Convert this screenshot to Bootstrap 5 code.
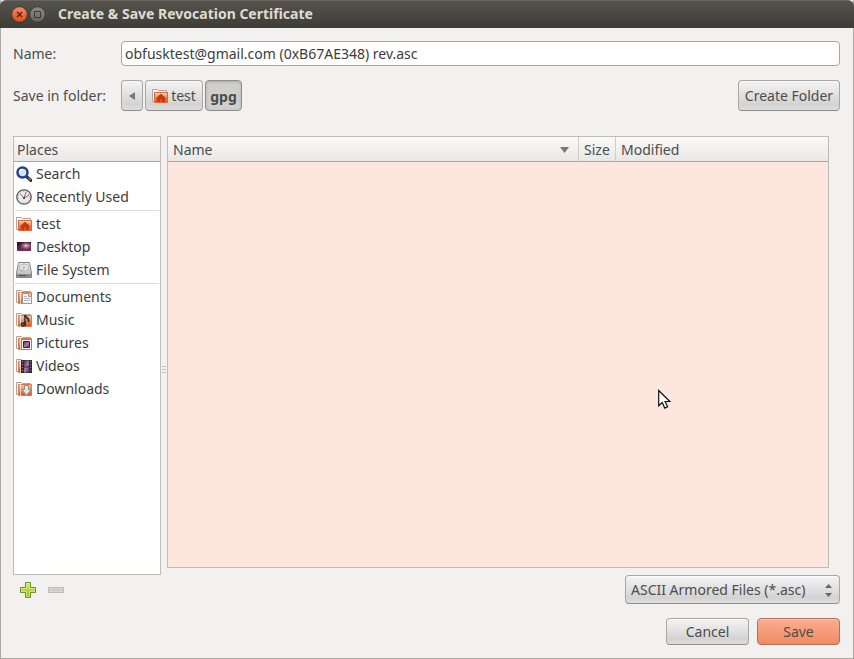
<!DOCTYPE html>
<html lang="en">
<head>
<meta charset="utf-8">
<meta name="viewport" content="width=device-width, initial-scale=1">
<title>Create &amp; Save Revocation Certificate</title>
<link rel="stylesheet" href="https://cdn.jsdelivr.net/npm/bootstrap@5.3.0/dist/css/bootstrap.min.css">
<style>
body { font: 14px/20px "Noto Sans", "Open Sans", sans-serif; color: #4c4c4c; background: #f2f1f0; }
svg { display: block; flex: none; }
.dialog-window { border: 1px solid #aca9a4; border-top: 0; }
.title-bar { height: 28px; margin: 0 -1px; padding: 0 11px 1px; gap: 1px; background: linear-gradient(#55534c, #3d3c37); border-top: 1px solid #66645d; border-radius: 6px 6px 0 0; color: #dfdbd2; }
.title-bar h1 { font-size: 14px; line-height: 20px; padding-left: 11px; }
.round-btn { width: 17px; height: 17px; border: 0; padding: 0; background: none; }
.dialog-body { padding: 13px 13px 13px 12px; }
.row-label { width: 108px; }
.name-input { height: 25px; padding: 0 3px 1px; font-size: 14px; line-height: 20px; color: #3c3c3c; border: 1px solid #a8a49f; border-radius: 4px; background: #fff; }
.gtk-btn { display: flex; align-items: center; justify-content: center; padding: 0 4px; font-size: 14px; line-height: 20px; color: #4c4c4c; border: 1px solid #a9a7a5; border-bottom-color: #8f8d8b; border-radius: 4px; background: linear-gradient(#f4f4f4, #e2e2e2 45%, #d3d3d3 80%, #dedede); box-shadow: inset 0 1px #fafafa; white-space: nowrap; }
.folder-row { margin-top: 14px; }
.path-bar { gap: 2px; }
.path-btn { height: 31px; }
.path-back { width: 22px; }
.path-home { width: 58px; gap: 3px; }
.path-current { width: 37px; font-weight: 700; background: #d0cfce; border-color: #8f8d8b; box-shadow: inset 0 1px 3px #aaa; padding-top: 2px; }
.create-btn { width: 102px; height: 31px; }
.panes { margin-top: 25px; }
.places-col { width: 148px; }
.pane-box { border: 1px solid #bfbcb8; }
.pane-head, .file-table th { height: 25px; padding: 2px 3px 0; font-size: 14px; line-height: 22px; font-weight: 400; color: #4c4c4c; background: linear-gradient(#f9f9f8, #e9e8e7); border-bottom: 1px solid #aaa7a3; }
.file-table { border-collapse: separate; border-spacing: 0; }
.file-table th { padding: 2px 5px 0; }
.file-table th + th { border-left: 1px solid #cfcdca; }
.col-size { width: 37px; }
.col-modified { width: 213px; }
.place-link { display: flex; align-items: center; gap: 4px; height: 23px; padding-left: 2px; color: #3c3c3c; text-decoration: none; white-space: nowrap; }
.place-sep { height: 4px; margin: 0 1px; padding-top: 2px; }
.place-sep::before { content: ""; display: block; height: 1px; background: #dddcda; }
.grip { width: 6px; }
.file-pane { margin: 0 11px 7px 0; background: #fde6de; }
.pointer { position: absolute; left: 490px; top: 252px; }
.tool-row { height: 29px; padding-left: 7px; gap: 12px; }
.tool-btn { width: 16px; height: 16px; border: 0; padding: 0; background: none; }
.filter-wrap { width: 215px; }
.filter-select { display: block; width: 100%; height: 29px; padding: 0 5px; appearance: none; }
.filter-arrows { position: absolute; right: 8px; top: 9px; pointer-events: none; }
.footer-row { margin-top: 14px; gap: 8px; }
.action-btn { width: 83px; height: 27px; }
.save-btn { background: linear-gradient(#fbad92, #f08a62); border-color: #b0705a; box-shadow: inset 0 1px #ffc0a9; }
</style>
<script src="https://cdn.jsdelivr.net/npm/bootstrap@5.3.0/dist/js/bootstrap.bundle.min.js"></script>
</head>
<body>
<svg width="0" height="0" class="position-absolute" aria-hidden="true">
  <defs>
    <linearGradient id="orange" x2="0" y2="1"><stop stop-color="#f9cba6"/><stop offset=".5" stop-color="#f0905a"/><stop offset="1" stop-color="#dc4a16"/></linearGradient>
    <linearGradient id="closeFill" x2="0" y2="1"><stop stop-color="#f58b66"/><stop offset="1" stop-color="#df4a1b"/></linearGradient>
    <linearGradient id="greyFill" x2="0" y2="1"><stop stop-color="#8e8c84"/><stop offset="1" stop-color="#65635c"/></linearGradient>
    <linearGradient id="metal" x2="0" y2="1"><stop stop-color="#ececec"/><stop offset="1" stop-color="#b5b5b5"/></linearGradient>
    <linearGradient id="green" x2="0" y2="1"><stop stop-color="#dcea62"/><stop offset="1" stop-color="#98b822"/></linearGradient>
    <linearGradient id="purple" x2="1" y2="1"><stop stop-color="#4b2548"/><stop offset=".5" stop-color="#a97aab"/><stop offset="1" stop-color="#5c3566"/></linearGradient>
    <linearGradient id="desk" x2="0" y2="1"><stop stop-color="#2e0719"/><stop offset="1" stop-color="#7a3058"/></linearGradient>
    <radialGradient id="deskGlow" cx=".65" cy=".4" r=".5"><stop stop-color="#f3cfe0"/><stop offset="1" stop-color="#c06a98" stop-opacity="0"/></radialGradient>
    <g id="folder">
      <path d="M.5 13.500v-12h5l1 1h8v11z" fill="#f7f6f4" stroke="#aaa7a3"/>
      <path d="M2.500 4.500h13v10h-13z" fill="url(#orange)" stroke="#d9683c"/>
      <path d="M3.500 5.500h11" stroke="#ffe3c7" opacity=".7"/>
    </g>
    <g id="sleeve">
      <path d="M.5 13.500v-12h5l1 1h8v11z" fill="#f7f6f4" stroke="#aaa7a3"/>
      <path d="M2.500 3.500h13v11h-13z" fill="url(#orange)" stroke="#e07a4c"/>
      <path d="M4.500 3v12" stroke="#fff0df" opacity=".75"/>
    </g>
    <g id="homeFolder">
      <use href="#folder"/>
      <path d="M9 6 4 10.500h1.500v3H8V11h2v2.500h2.500v-3H14z" fill="#c7360c" stroke="#b93410" stroke-width=".5"/>
    </g>
  </defs>
</svg>

<div class="dialog-window d-flex flex-column min-vh-100">
  <header class="title-bar d-flex align-items-center">
    <button class="round-btn" type="button" aria-label="Close"><svg width="17" height="17" viewBox="0 0 17 17"><circle cx="8.500" cy="8.500" r="7.800" fill="url(#closeFill)" stroke="#32312c" stroke-width=".8"/><path d="m6 6 5 5m0-5-5 5" stroke="#4b2012" stroke-width="1.200"/></svg></button>
    <button class="round-btn" type="button" aria-label="Maximize"><svg width="17" height="17" viewBox="0 0 17 17"><circle cx="8.500" cy="8.500" r="7.800" fill="url(#greyFill)" stroke="#32312c" stroke-width=".8"/><path d="M5.500 5.500h6v6h-6z" fill="none" stroke="#3a3934"/></svg></button>
    <h1 class="m-0 fw-bold">Create &amp; Save Revocation Certificate</h1>
  </header>

  <main class="dialog-body d-flex flex-column flex-grow-1">
    <div class="d-flex align-items-center">
      <label class="row-label" for="fileName">Name:</label>
      <input class="name-input flex-grow-1" id="fileName" type="text" value="obfusktest@gmail.com (0xB67AE348) rev.asc">
    </div>

    <div class="folder-row d-flex align-items-center">
      <span class="row-label" id="folderLabel">Save in folder:</span>
      <div class="path-bar d-flex me-auto" role="group" aria-labelledby="folderLabel">
        <button class="gtk-btn path-btn path-back" type="button" aria-label="Back"><svg width="6" height="8" viewBox="0 0 6 8"><path d="M6 0v8L0 4z" fill="#777"/></svg></button>
        <button class="gtk-btn path-btn path-home" type="button"><svg width="16" height="16" viewBox="0 0 16 16"><use href="#homeFolder"/></svg>test</button>
        <button class="gtk-btn path-btn path-current" type="button">gpg</button>
      </div>
      <button class="gtk-btn create-btn" type="button">Create Folder</button>
    </div>

    <div class="panes d-flex flex-grow-1">
      <div class="places-col d-flex flex-column flex-shrink-0">
        <nav class="pane-box bg-white flex-grow-1" aria-label="Places">
          <div class="pane-head">Places</div>
          <a class="place-link" href="#"><svg width="16" height="16" viewBox="0 0 16 16"><path d="m11 11 4 3.500" stroke="#333" stroke-width="3" stroke-linecap="round"/><path d="m12.500 12 2 1.800" stroke="#bbb"/><circle cx="6.500" cy="6.500" r="5" fill="#d6e3f5" stroke="#23408e" stroke-width="2.500"/><path d="M3.500 6a3 3 0 0 1 3-2.500" stroke="#fff" stroke-width="1.500" fill="none"/></svg>Search</a>
          <a class="place-link" href="#"><svg width="16" height="16" viewBox="0 0 16 16"><circle cx="8" cy="8" r="7.200" fill="#ececeb" stroke="#555753" stroke-width="1.300"/><circle cx="8" cy="8" r="5.500" fill="none" stroke="#aaa" stroke-dasharray="1 2"/><path d="M4 4.500 8 9l2-6" stroke="#777" fill="none"/><path d="m8 9 5-3" stroke="#d44"/><circle cx="8" cy="9" r="1.200" fill="#555"/></svg>Recently Used</a>
          <div class="place-sep"></div>
          <a class="place-link" href="#"><svg width="16" height="16" viewBox="0 0 16 16"><use href="#homeFolder"/></svg>test</a>
          <a class="place-link" href="#"><svg width="16" height="16" viewBox="0 0 16 16"><path d="M1 3h14v9H1z" fill="url(#desk)"/><path d="M1 3h14v9H1z" fill="url(#deskGlow)"/></svg>Desktop</a>
          <a class="place-link" href="#"><svg width="16" height="16" viewBox="0 0 16 16"><path d="M2.500.5h11l2 10.500v4.500H.5V11z" fill="url(#metal)" stroke="#858585"/><path d="M1 12h14v3H1z" fill="#8b8b8b"/><ellipse cx="8" cy="5.500" rx="4.500" ry="3.500" fill="#e4e4e4" stroke="#b5b5b5"/><circle cx="8" cy="5.500" r="1" fill="#aaa"/><path d="m4.500 10 3-3.500" stroke="#aaa"/><path d="M3 13.500h7" stroke="#555"/></svg>File System</a>
          <div class="place-sep"></div>
          <a class="place-link" href="#"><svg width="16" height="16" viewBox="0 0 16 16"><use href="#sleeve"/><path d="M6.500 4.500h6l3 3v7h-9z" fill="#f4f4f3" stroke="#999"/><path d="M12.500 4.500v3h3" fill="#ddd" stroke="#999"/><path d="M8 7.500h3m-3 2h6m-6 2h6" stroke="#b5b5b5"/></svg>Documents</a>
          <a class="place-link" href="#"><svg width="16" height="16" viewBox="0 0 16 16"><use href="#sleeve"/><path d="M9 3v9M9 3.500c1 2.500 4.500 2 3.500 6.500" fill="none" stroke="#2e3436" stroke-width="2"/><ellipse cx="7.300" cy="12.500" rx="2.700" ry="2.200" fill="#2e3436"/><path d="M6 12.500h1.500M9 5v4" stroke="#8a8d8a" stroke-width=".7"/></svg>Music</a>
          <a class="place-link" href="#"><svg width="16" height="16" viewBox="0 0 16 16"><use href="#sleeve"/><path d="M5.500 4.500h10v10h-10z" fill="#f3f3f2" stroke="#888"/><path d="M7.500 6.500h6v6h-6z" fill="url(#purple)" stroke="#2e2433"/></svg>Pictures</a>
          <a class="place-link" href="#"><svg width="16" height="16" viewBox="0 0 16 16"><use href="#sleeve"/><path d="M5 2h11v13H5z" fill="#302a32"/><path d="M8 2.500h5v6H8zm0 7h5v5H8z" fill="url(#purple)"/><path d="M6.500 3v12m8-12v12" stroke="#8a848c" stroke-dasharray="1 2"/></svg>Videos</a>
          <a class="place-link" href="#"><svg width="16" height="16" viewBox="0 0 16 16"><use href="#sleeve"/><path d="M8.500 4.500h4v4h2.500l-4.500 6-4.500-6h2.500z" fill="#e3e3e2" stroke="#8d8d8c"/></svg>Downloads</a>
        </nav>
        <div class="tool-row d-flex align-items-center">
          <button class="tool-btn" type="button" aria-label="Add bookmark"><svg width="16" height="16" viewBox="0 0 16 16"><path d="M5.500.5h5v5h5v5h-5v5h-5v-5h-5v-5h5z" fill="url(#green)" stroke="#5f9632"/><path d="M6.500 1.500h3v5h5v3h-5v5h-3v-5h-5v-3h5z" fill="none" stroke="#e4ef90" opacity=".7"/></svg></button>
          <button class="tool-btn" type="button" aria-label="Remove bookmark" disabled><svg width="16" height="16" viewBox="0 0 16 16"><path d="M.5 5.500h15v5H.5z" fill="#cdcac8" stroke="#bdbab7"/><path d="M1.500 6.500h13v3h-13z" fill="none" stroke="#d9d7d5"/></svg></button>
        </div>
      </div>

      <div class="grip d-flex align-items-center justify-content-center flex-shrink-0"><svg width="4" height="8" viewBox="0 0 4 8"><path d="M0 .5h4m-4 3h4m-4 3h4" stroke="#c5c2bf"/></svg></div>

      <div class="d-flex flex-column flex-grow-1">
        <div class="file-pane pane-box position-relative flex-grow-1">
          <table class="file-table w-100">
            <thead>
              <tr>
                <th scope="col"><div class="d-flex align-items-center justify-content-between">Name<svg class="me-1" width="9" height="6" viewBox="0 0 9 6"><path d="M0 0h9L4.500 6z" fill="#777"/></svg></div></th>
                <th scope="col" class="col-size">Size</th>
                <th scope="col" class="col-modified">Modified</th>
              </tr>
            </thead>
          </table>
          <svg class="pointer" width="14" height="21" viewBox="0 0 14 21" aria-hidden="true"><path d="M.7 1.500v15.300l3.500-3.200 2.600 5.500 2.800-1.300-2.500-5.300h4.700z" fill="#fff" stroke="#111" stroke-width="1.200"/></svg>
        </div>
        <div class="filter-wrap position-relative align-self-end">
          <select class="gtk-btn filter-select" aria-label="File type"><option>ASCII Armored Files (*.asc)</option></select>
          <svg class="filter-arrows" width="7" height="13" viewBox="0 0 7 13"><path d="M0 4h7L3.500 0zm0 5h7l-3.500 4z" fill="#666"/></svg>
        </div>
      </div>
    </div>

    <div class="footer-row d-flex justify-content-end">
      <button class="gtk-btn action-btn" type="button">Cancel</button>
      <button class="gtk-btn action-btn save-btn" type="button">Save</button>
    </div>
  </main>
</div>
</body>
</html>
